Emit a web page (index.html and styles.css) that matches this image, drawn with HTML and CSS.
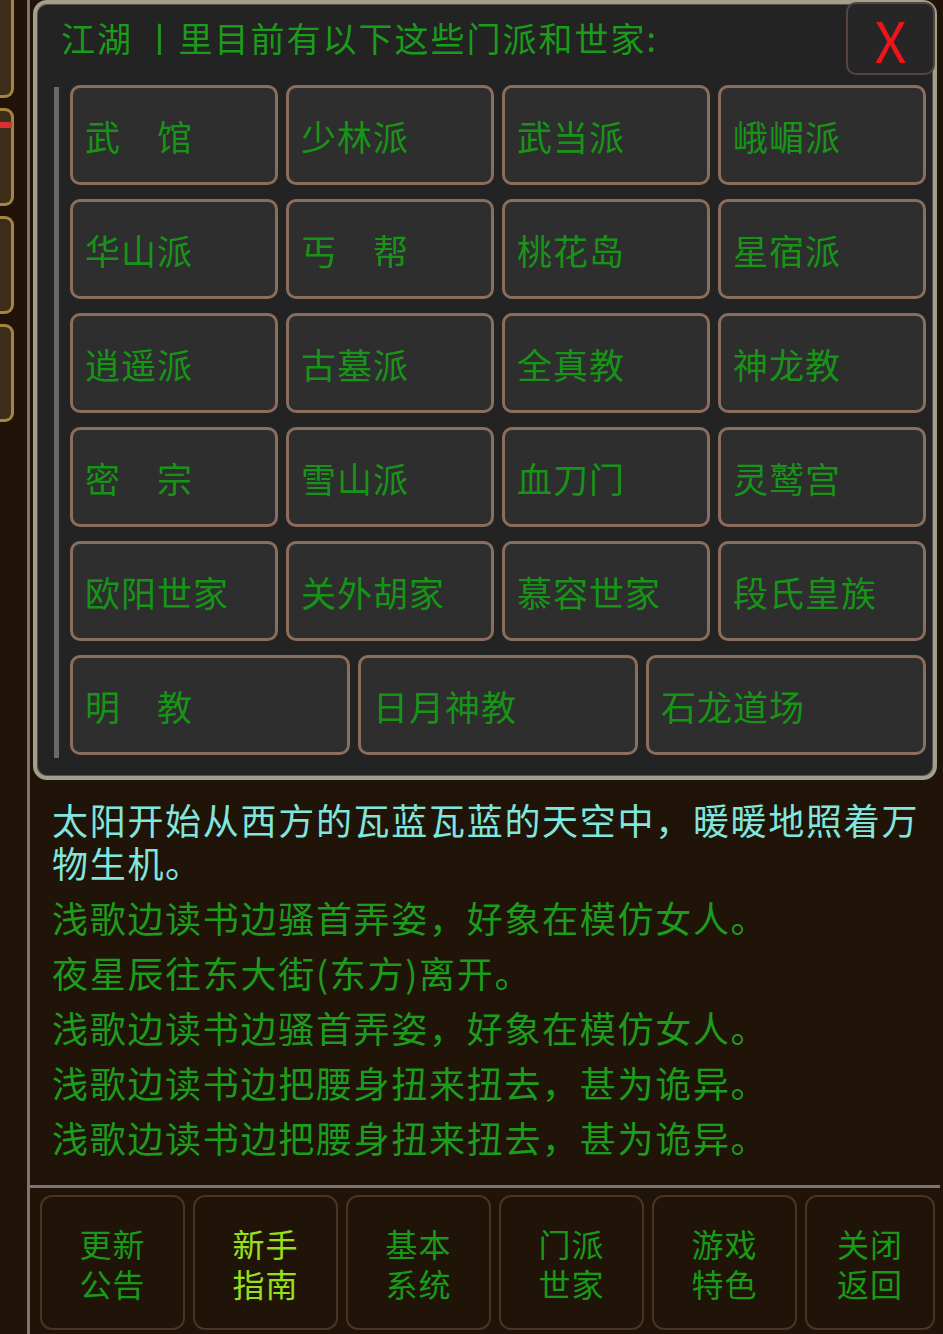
FILE: index.html
```html
<!DOCTYPE html>
<html lang="zh-CN">
<head>
    <meta charset="UTF-8">
    <meta name="viewport" content="width=device-width, initial-scale=1.0">
    <title>江湖</title>
    <link rel="stylesheet" href="styles.css">
</head>
<body>
    <div class="sidebar">
        <div class="tab first"></div>
        <div class="tab"><span class="mark"></span></div>
        <div class="tab"></div>
        <div class="tab"></div>
    </div>

    <div class="main">
        <div class="log">
            <p class="green old">浅歌边读书边骚首弄姿，好象在模仿女人。</p>
            <p class="cyan">太阳开始从西方的瓦蓝瓦蓝的天空中，暖暖地照着万物生机。</p>
            <p class="green">浅歌边读书边骚首弄姿，好象在模仿女人。</p>
            <p class="green">夜星辰往东大街(东方)离开。</p>
            <p class="green">浅歌边读书边骚首弄姿，好象在模仿女人。</p>
            <p class="green">浅歌边读书边把腰身扭来扭去，甚为诡异。</p>
            <p class="green">浅歌边读书边把腰身扭来扭去，甚为诡异。</p>
        </div>

        <div class="menu">
            <div class="menu-btn">更新<br>公告</div>
            <div class="menu-btn active">新手<br>指南</div>
            <div class="menu-btn">基本<br>系统</div>
            <div class="menu-btn">门派<br>世家</div>
            <div class="menu-btn">游戏<br>特色</div>
            <div class="menu-btn">关闭<br>返回</div>
        </div>

        <div class="dialog">
            <div class="dialog-head">
                <div class="title">江湖 丨里目前有以下这些门派和世家:</div>
                <div class="close">X</div>
            </div>
            <div class="dialog-body">
                <div class="scrollbar"></div>
                <div class="sects">
                    <div class="sect">武　馆</div>
                    <div class="sect">少林派</div>
                    <div class="sect">武当派</div>
                    <div class="sect">峨嵋派</div>
                    <div class="sect">华山派</div>
                    <div class="sect">丐　帮</div>
                    <div class="sect">桃花岛</div>
                    <div class="sect">星宿派</div>
                    <div class="sect">逍遥派</div>
                    <div class="sect">古墓派</div>
                    <div class="sect">全真教</div>
                    <div class="sect">神龙教</div>
                    <div class="sect">密　宗</div>
                    <div class="sect">雪山派</div>
                    <div class="sect">血刀门</div>
                    <div class="sect">灵鹫宫</div>
                    <div class="sect">欧阳世家</div>
                    <div class="sect">关外胡家</div>
                    <div class="sect">慕容世家</div>
                    <div class="sect">段氏皇族</div>
                    <div class="sect wide">明　教</div>
                    <div class="sect wide">日月神教</div>
                    <div class="sect wide">石龙道场</div>
                </div>
            </div>
        </div>
    </div>
</body>
</html>
```

FILE: styles.css
```css
body {
    margin: 0;
    width: 943px;
    height: 1334px;
    overflow: hidden;
    display: flex;
    background-color: #201408;
    font-family: "Noto Sans CJK SC", "Noto Sans", sans-serif;
}
.sidebar {
    width: 27px;
    border-right: 3px solid #7c766e;
    display: flex;
    flex-direction: column;
    gap: 10px;
}
.tab {
    position: relative;
    width: 11px;
    height: 92px;
    background-color: #3b2d17;
    border: 3px solid #a4843f;
    border-left: none;
    border-radius: 0 9px 9px 0;
}
.tab.first {
    margin-top: -10px;
    height: 102px;
}
.tab .mark {
    position: absolute;
    left: 0;
    top: 11px;
    width: 12px;
    height: 6px;
    background-color: #d8302c;
}
.main {
    flex: 1;
    position: relative;
    display: flex;
    flex-direction: column;
}
.log {
    flex: 1;
    overflow: hidden;
    display: flex;
    flex-direction: column;
    justify-content: flex-end;
    padding: 0 8px 14px 22px;
}
.log p {
    margin: 0 0 12px 0;
    font-size: 36px;
    line-height: 43px;
    letter-spacing: 1.7px;
}
.log p.old {
    margin-bottom: 16px;
}
.log .cyan {
    color: #80e6de;
}
.log .green {
    color: #1c9c1c;
}
.menu {
    margin-right: 3px;
    border-top: 3px solid #7a7570;
    padding: 7px 0 4px 10px;
    display: grid;
    grid-template-columns: repeat(5, 145px) 130px;
    gap: 8px;
}
.menu-btn {
    height: 131px;
    border: 2px solid #4b3421;
    border-radius: 12px;
    display: flex;
    align-items: center;
    justify-content: center;
    text-align: center;
    font-size: 32px;
    line-height: 40px;
    letter-spacing: 1px;
    color: #189a18;
}
.menu-btn.active {
    color: #99e01c;
}

/* sect list popup */
.dialog {
    position: absolute;
    top: 0;
    left: 3px;
    width: 896px;
    height: 772px;
    background-color: #232323;
    border: 4px solid #a49e8c;
    border-radius: 14px;
    box-shadow: inset 0 0 0 1px #57534a;
}
.dialog-head {
    height: 81px;
    display: flex;
    justify-content: space-between;
    align-items: flex-start;
}
.title {
    padding: 15px 0 0 24px;
    font-size: 34px;
    line-height: 38px;
    letter-spacing: 2px;
    color: #1a9c1a;
}
.close {
    width: 85px;
    height: 69px;
    margin: -2px -2px 0 0;
    background-color: #262626;
    border: 2px solid #54463e;
    border-radius: 10px;
    display: flex;
    align-items: center;
    justify-content: center;
    font-size: 56px;
    color: #ee141a;
}
.dialog-body {
    display: flex;
    padding-left: 17px;
}
.scrollbar {
    width: 5px;
    height: 671px;
    margin-top: 2px;
    margin-right: 11px;
    background-color: #696969;
}
.sects {
    width: 856px;
    display: grid;
    grid-template-columns: repeat(12, 1fr);
    grid-auto-rows: 100px;
    gap: 14px 8px;
}
.sect {
    grid-column: span 3;
    box-sizing: border-box;
    background-color: #2e2e2e;
    border: 3px solid #8a6d5d;
    border-radius: 10px;
    display: flex;
    align-items: center;
    padding-left: 12px;
    font-size: 35px;
    letter-spacing: 1px;
    color: #179417;
}
.sect.wide {
    grid-column: span 4;
}
```
